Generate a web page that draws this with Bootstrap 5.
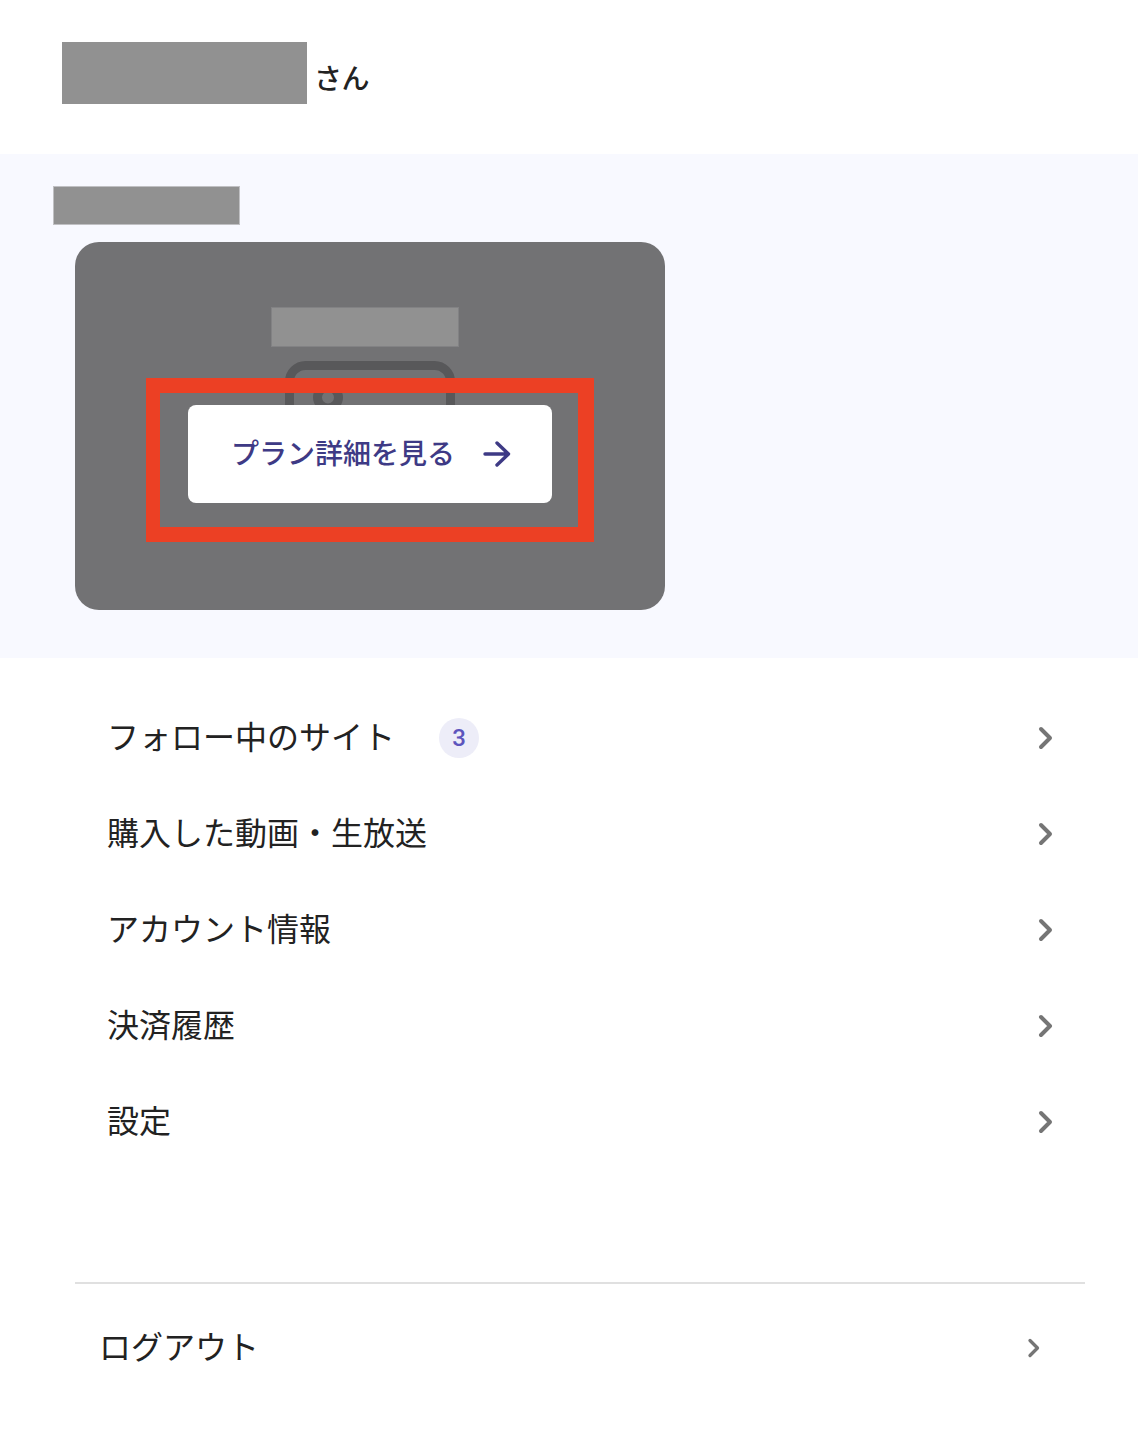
<!DOCTYPE html>
<html lang="ja">
<head>
<meta charset="utf-8">
<meta name="viewport" content="width=device-width, initial-scale=1">
<title>マイページ</title>
<link href="https://cdn.jsdelivr.net/npm/bootstrap@5.3.0/dist/css/bootstrap.min.css" rel="stylesheet">
<style>
body{font-family:"Noto Sans CJK JP",sans-serif;color:#222;background:#fff;min-height:1432px}
.user-bar{height:154px;padding:42px 62px 0;gap:7px}
.user-name{width:245px;height:62px;background:#919191}
.user-suffix{font-size:28px;font-weight:500;line-height:70px;letter-spacing:-.5px}
.plan-area{height:504px;background:#f8f9ff;padding-top:32px}
.plan-label{width:187px;height:39px;margin-left:53px;background:#919191;border:1px solid #c0c0c3}
.plan-card{width:590px;height:368px;margin:17px 0 0 75px;border-radius:24px;background:#727274;padding-top:65px}
.plan-name{width:188px;height:40px;margin-left:196px;background:#919191;border:1px solid #828284}
.plan-icon{left:210px;top:119px}
.plan-highlight{left:71px;top:136px;width:448px;height:164px;border:15px solid #ec4024;border-left-width:14px;border-right-width:16px}
.plan-btn,.plan-btn:hover{left:113px;top:163px;width:364px;height:98px;background:#fff;color:#3e3a85;border:0;border-radius:8px;font-size:28px;font-weight:500;line-height:40px;padding:0 39px 2px 43px}
.plan-btn span{padding-bottom:3px}
.menu-rows{padding-top:32px;height:624px}
.menu-rows .list-group-item,.logout-row{height:96px;border:0;color:#222;background:transparent;font-size:32px;line-height:48px;padding:0 85px 0 107px}
.menu-rows .row-text{padding-bottom:6px}
.count-badge{width:40px;height:40px;margin-left:44px;font-size:24px;font-weight:500;line-height:40px;font-family:Roboto,"Noto Sans CJK JP",sans-serif;background:#ededf8;color:#5d55bd}
.bottom-nav{margin:0 53px 0 75px;border-top:2px solid #e0e0e0}
.logout-row{height:128px;padding:0 45px 0 24px}
.logout-row span{padding-bottom:6px}
</style>
<script src="https://cdn.jsdelivr.net/npm/bootstrap@5.3.0/dist/js/bootstrap.bundle.min.js"></script>
</head>
<body>
<header class="user-bar d-flex align-items-start">
  <div class="user-name"></div>
  <div class="user-suffix">さん</div>
</header>
<section class="plan-area">
  <div class="plan-label"></div>
  <div class="plan-card position-relative">
    <div class="plan-name"></div>
    <svg class="plan-icon position-absolute" width="170" height="120" fill="none" stroke="#58585a" stroke-width="9"><rect x="4.500" y="4.500" width="161" height="111" rx="16"/><circle cx="43" cy="36.500" r="10.500"/></svg>
    <div class="plan-highlight position-absolute"></div>
    <a href="#" class="plan-btn btn position-absolute d-flex align-items-center justify-content-between">
      <span>プラン詳細を見る</span>
      <svg width="32" height="32" fill="none" stroke="currentColor" stroke-width="3.400" stroke-linecap="round" stroke-linejoin="round"><path d="M4 17H27M16 6L27.500 17L16 28"/></svg>
    </a>
  </div>
</section>
<nav class="menu-rows list-group list-group-flush">
  <a href="#" class="list-group-item d-flex align-items-center"><span class="row-text">フォロー中のサイト</span><span class="count-badge rounded-circle text-center">3</span><svg class="ms-auto" width="16" height="26" fill="none" stroke="#757575" stroke-width="4" stroke-linecap="round" stroke-linejoin="round"><path d="M4 4L13 13L4 22"/></svg></a>
  <a href="#" class="list-group-item d-flex align-items-center"><span class="row-text">購入した動画・生放送</span><svg class="ms-auto" width="16" height="26" fill="none" stroke="#757575" stroke-width="4" stroke-linecap="round" stroke-linejoin="round"><path d="M4 4L13 13L4 22"/></svg></a>
  <a href="#" class="list-group-item d-flex align-items-center"><span class="row-text">アカウント情報</span><svg class="ms-auto" width="16" height="26" fill="none" stroke="#757575" stroke-width="4" stroke-linecap="round" stroke-linejoin="round"><path d="M4 4L13 13L4 22"/></svg></a>
  <a href="#" class="list-group-item d-flex align-items-center"><span class="row-text">決済履歴</span><svg class="ms-auto" width="16" height="26" fill="none" stroke="#757575" stroke-width="4" stroke-linecap="round" stroke-linejoin="round"><path d="M4 4L13 13L4 22"/></svg></a>
  <a href="#" class="list-group-item d-flex align-items-center"><span class="row-text">設定</span><svg class="ms-auto" width="16" height="26" fill="none" stroke="#757575" stroke-width="4" stroke-linecap="round" stroke-linejoin="round"><path d="M4 4L13 13L4 22"/></svg></a>
</nav>
<footer class="bottom-nav">
  <a href="#" class="logout-row d-flex align-items-center text-decoration-none"><span>ログアウト</span><svg class="ms-auto" width="14" height="22" fill="none" stroke="#757575" stroke-width="3.300" stroke-linecap="round" stroke-linejoin="round"><path d="M4 3.500L11.500 11L4 18.500"/></svg></a>
</footer>
</body>
</html>
